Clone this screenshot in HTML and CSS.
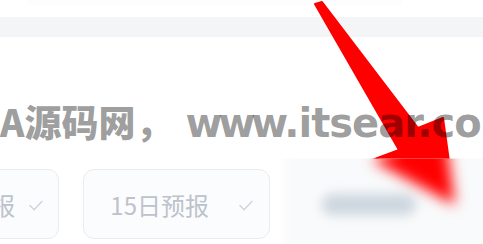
FILE: index.html
```html
<!DOCTYPE html>
<html lang="zh">
<head>
<meta charset="utf-8">
<link rel="stylesheet" href="styles.css">
</head>
<body>
<div class="page">
  <div class="top"><div class="top-line"></div></div>
  <div class="band"></div>
  <div class="options">
    <div class="btn btn-first"><span class="btn-text">7日预报</span><svg class="check" viewBox="0 0 15 11"><path d="M1 5.5 L5.5 10 L14 1"/></svg></div>
    <div class="btn btn-second"><span class="btn-text">15日预报</span><svg class="check" viewBox="0 0 15 11"><path d="M1 5.5 L5.5 10 L14 1"/></svg></div>
  </div>

  <svg class="overlay" width="483" height="244" viewBox="0 0 483 244">
    <defs>
      <filter id="soft" x="-20%" y="-20%" width="140%" height="140%"><feGaussianBlur stdDeviation="5"/></filter>
      <filter id="blurBar" x="-50%" y="-150%" width="200%" height="400%"><feGaussianBlur stdDeviation="6"/></filter>
      <filter id="blurRed" x="-50%" y="-50%" width="200%" height="200%"><feGaussianBlur stdDeviation="7"/></filter>
      <clipPath id="above"><rect x="0" y="0" width="483" height="158.5"/></clipPath>
      <clipPath id="below"><rect x="0" y="158.5" width="483" height="90"/></clipPath>
    </defs>
    <rect x="284" y="150" width="215" height="100" fill="#f9fafb" filter="url(#soft)" clip-path="url(#below)"/>
    <rect x="322" y="194" width="94" height="21" rx="10" fill="#ccd5de" filter="url(#blurBar)"/>
    <g clip-path="url(#below)">
      <polygon filter="url(#blurRed)" fill="#ff0000" points="315,4 322,2 418,128 443,118 455,205 372,160 399,150"/>
    </g>
    <g clip-path="url(#above)">
      <polygon fill="#ff0000" stroke="#ff0000" stroke-width="2" stroke-linejoin="round" points="315,4 322,2 418,128 443,118 455,205 372,160 399,150"/>
    </g>
  </svg>

  <div class="watermark"><span class="wm-cjk">A源码网，</span><span class="wm-latin"><span class="wm-www">www</span>.itsear.com</span></div>
</div>
</body>
</html>
```

FILE: styles.css
```css
html, body {
  margin: 0;
  padding: 0;
  background: #ffffff;
}
.page {
  position: relative;
  width: 483px;
  height: 244px;
  overflow: hidden;
  background: #ffffff;
}
.top {
  height: 17px;
}
.top-line {
  margin-left: 27px;
  width: 375px;
  height: 5px;
  background: #fdfdfd;
}
.band {
  height: 20px;
  background: #f4f5f7;
}
.options {
  display: flex;
  gap: 24px;
  margin-top: 132px;
  margin-left: -98px;
}
.btn {
  box-sizing: border-box;
  height: 70px;
  display: flex;
  align-items: center;
  border: 1px solid #e9ecf0;
  border-radius: 11px;
  background: #fbfcfd;
  padding: 0 15px 0 27px;
  font-family: "Noto Sans CJK SC", "Noto Sans", sans-serif;
  font-size: 24px;
  color: #bcc3cc;
}
.btn-first {
  gap: 14px;
}
.btn-second {
  width: 187px;
  justify-content: space-between;
  padding-left: 26px;
  padding-right: 16px;
}
.btn-text {
  line-height: 1;
  margin-top: 2px;
}
.check {
  width: 14px;
  height: 11px;
  margin-top: 3px;
  fill: none;
  stroke: #cdd3da;
  stroke-width: 1.4;
  stroke-linecap: round;
  stroke-linejoin: round;
}
.overlay {
  position: absolute;
  left: 0;
  top: 0;
}
.watermark {
  position: absolute;
  left: 0;
  top: 99px;
  white-space: nowrap;
  color: rgba(0, 0, 0, 0.4);
  font-weight: bold;
  line-height: 44px;
}
.wm-cjk {
  font-family: "Noto Sans CJK SC", sans-serif;
  font-size: 37px;
  font-weight: 900;
}
.wm-latin {
  font-family: "DejaVu Sans", sans-serif;
  font-size: 40px;
  letter-spacing: -1px;
  margin-left: 13px;
}
.wm-www {
  letter-spacing: -4px;
}
```
